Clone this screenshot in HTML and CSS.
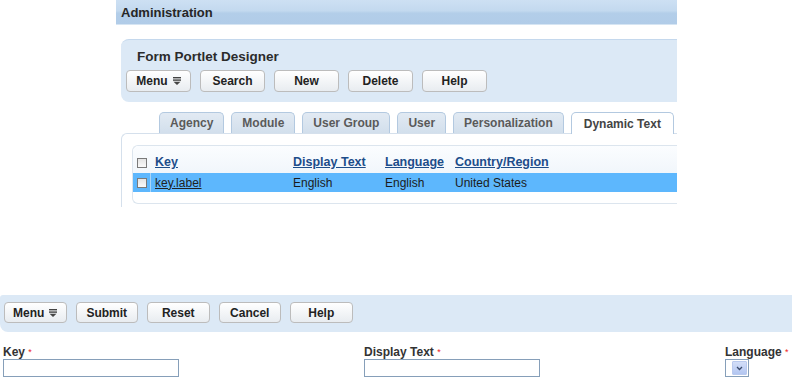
FILE: index.html
```html
<!DOCTYPE html>
<html>
<head>
<meta charset="utf-8">
<link rel="stylesheet" href="styles.css">
</head>
<body>
<div class="admin">
  <div class="admin-bar">Administration</div>
  <div class="designer">
    <div class="designer-title">Form Portlet Designer</div>
    <div class="toolbar">
      <span class="btn">Menu <svg class="menu-ic" width="8" height="8" viewBox="0 0 8 8"><rect x="0" y="0" width="8" height="1.4"/><rect x="0" y="2.4" width="8" height="1.4"/><polygon points="0.5,4.8 7.5,4.8 4,8"/></svg></span>
      <span class="btn">Search</span>
      <span class="btn">New</span>
      <span class="btn">Delete</span>
      <span class="btn">Help</span>
    </div>
  </div>
  <div class="tabs">
    <span class="tab">Agency</span>
    <span class="tab">Module</span>
    <span class="tab">User Group</span>
    <span class="tab">User</span>
    <span class="tab">Personalization</span>
    <span class="tab active">Dynamic Text</span>
  </div>
  <div class="tab-body">
    <div class="grid">
      <div class="grid-row head">
        <div class="cell cb"><span class="check"></span></div>
        <div class="cell"><a class="hlink">Key</a></div>
        <div class="cell"><a class="hlink">Display Text</a></div>
        <div class="cell"><a class="hlink">Language</a></div>
        <div class="cell"><a class="hlink">Country/Region</a></div>
      </div>
      <div class="grid-row data">
        <div class="cell cb sep"><span class="check"></span></div>
        <div class="cell"><a class="dlink">key.label</a></div>
        <div class="cell">English</div>
        <div class="cell">English</div>
        <div class="cell">United States</div>
      </div>
    </div>
  </div>
</div>

<div class="form">
  <div class="form-toolbar">
    <span class="btn sm">Menu <svg class="menu-ic" width="8" height="8" viewBox="0 0 8 8"><rect x="0" y="0" width="8" height="1.4"/><rect x="0" y="2.4" width="8" height="1.4"/><polygon points="0.5,4.8 7.5,4.8 4,8"/></svg></span>
    <span class="btn sm">Submit</span>
    <span class="btn sm">Reset</span>
    <span class="btn sm">Cancel</span>
    <span class="btn sm">Help</span>
  </div>
  <div class="fields">
    <div class="field">
      <label class="lbl">Key <span class="req">*</span></label>
      <span class="input wide"></span>
    </div>
    <div class="field">
      <label class="lbl">Display Text <span class="req">*</span></label>
      <span class="input wide"></span>
    </div>
    <div class="field">
      <label class="lbl">Language <span class="req">*</span></label>
      <span class="select"><span class="arrow"><svg width="7" height="5" viewBox="0 0 7 5"><polyline points="1,1 3.5,3.5 6,1" fill="none" stroke="#3a4a6a" stroke-width="1.3"/></svg></span></span>
    </div>
  </div>
</div>
</body>
</html>
```

FILE: styles.css
```css
* { box-sizing: border-box; }
html, body { margin: 0; padding: 0; background: #fff; }
body {
  font-family: "Liberation Sans", Arial, sans-serif;
  color: #333;
  font-size: 12px;
}

.admin {
  margin-left: 116px;
  width: 561px;
  height: 207px;
  overflow: hidden;
}

.admin-bar {
  height: 25px;
  line-height: 25px;
  padding-left: 5px;
  font-size: 13px;
  font-weight: bold;
  color: #262626;
  background: linear-gradient(#cde0f3 0%, #c3d9ef 45%, #b3cee9 55%, #b1cce8 100%);
  border-bottom: 1px solid #d6e5f3;
}

.designer {
  margin: 14px 0 0 5px;
  height: 63px;
  background: #dce9f6;
  border-top: 1px solid #c4d8ed;
  border-radius: 8px 0 0 8px;
  padding: 8px 0 0 5px;
}
.designer-title {
  font-size: 13.5px;
  font-weight: bold;
  color: #2b2b2b;
  padding-left: 11px;
  height: 22px;
  line-height: 18px;
}

.toolbar, .form-toolbar {
  display: flex;
  gap: 9px;
}

.btn {
  display: inline-flex;
  align-items: center;
  justify-content: center;
  gap: 5px;
  min-width: 65px;
  height: 22px;
  padding: 0 8px;
  font-size: 12px;
  font-weight: bold;
  color: #222;
  border: 1px solid #bcbcbc;
  border-radius: 4px;
  background: linear-gradient(#ffffff, #e8ecf0);
  white-space: nowrap;
  flex-shrink: 0;
}
.btn.sm { min-width: 62.5px; height: 21px; }
.menu-ic { fill: #444; }

.tabs {
  display: flex;
  gap: 7px;
  margin: 10px 0 0 43px;
  height: 21px;
  position: relative;
  z-index: 1;
}
.tab {
  display: flex;
  align-items: center;
  padding: 0 10px;
  height: 21px;
  font-size: 12px;
  font-weight: bold;
  color: #5a5a5a;
  border: 1px solid #b3c9e0;
  border-bottom: none;
  border-radius: 5px 5px 0 0;
  background: linear-gradient(#e2eaf3, #d2dfec);
  white-space: nowrap;
  flex-shrink: 0;
}
.tab.active {
  background: #fff;
  color: #444;
  height: 22px;
  padding: 0 12px;
}

.tab-body {
  margin-left: 5px;
  height: 80px;
  border: 1px solid #d5e0ec;
  border-right: none;
  border-radius: 6px 0 0 0;
  padding: 11px 0 0 10px;
}

.grid {
  border: 1px solid #dce5ee;
  border-right: none;
  border-radius: 6px 0 0 6px;
  height: 59px;
}
.grid-row {
  display: grid;
  grid-template-columns: 18px 138px 92px 70px 1fr;
}
.grid-row.head {
  height: 27px;
  align-items: end;
  padding-bottom: 4px;
  background: linear-gradient(#fbfdff, #f1f6fb);
  border-radius: 6px 0 0 0;
}
.grid-row.data {
  height: 19px;
  align-items: center;
  background: #5db7fd;
  color: #1b1b1b;
}
.cell {
  padding-left: 4px;
  white-space: nowrap;
  font-size: 12px;
}
.cell.cb { padding-left: 4px; display: flex; align-items: center; height: 100%; }
.grid-row.head .cell.cb { align-items: flex-end; padding-bottom: 1px; }
.cell.sep { border-right: 1px solid #a9d5f8; }
.hlink {
  font-size: 12.5px;
  font-weight: bold;
  color: #1d4d8a;
  text-decoration: underline;
}
.dlink {
  color: #222;
  text-decoration: underline;
}
.check {
  display: inline-block;
  width: 10px;
  height: 10px;
  border: 1px solid #7a7a7a;
  background: linear-gradient(#e4e4e4, #fafafa);
}

.form { margin-top: 88px; }
.form-toolbar {
  height: 37px;
  background: #dce9f6;
  border-radius: 3px 0 0 8px;
  padding: 7px 0 0 4px;
}
.fields {
  display: grid;
  grid-template-columns: 361px 361px auto;
  padding: 13px 0 0 3px;
}
.field { display: flex; flex-direction: column; align-items: flex-start; }
.lbl {
  font-size: 12px;
  font-weight: bold;
  color: #333;
  line-height: 14px;
  height: 14px;
  white-space: nowrap;
}
.req { color: #e22; font-size: 9px; vertical-align: top; font-weight: normal; }
.input {
  display: block;
  height: 18px;
  border: 1px solid #869fb9;
  background: #fff;
}
.input.wide { width: 176px; }
.select {
  display: flex;
  justify-content: flex-end;
  align-items: center;
  width: 24px;
  height: 18px;
  border: 1px solid #869fb9;
  padding: 1px;
  background: #fff;
}
.arrow {
  display: flex;
  align-items: center;
  justify-content: center;
  width: 15px;
  height: 14px;
  background: linear-gradient(#d3def8, #b3c6f1);
  border: 1px solid #b9c9ee;
  border-radius: 1px;
}
```
